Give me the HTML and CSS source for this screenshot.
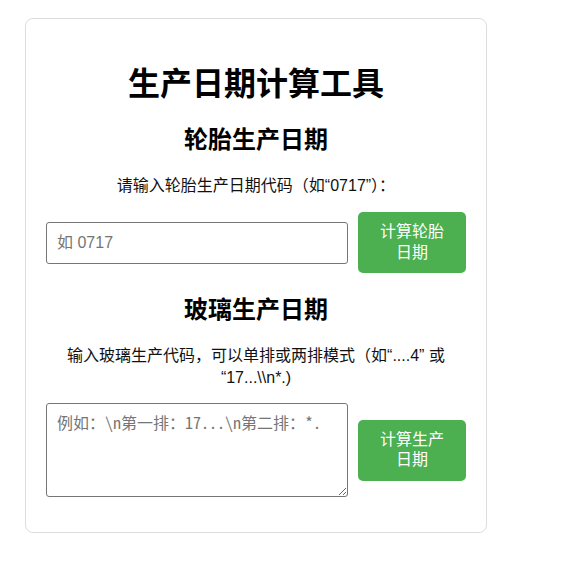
FILE: index.html
```html
<!DOCTYPE html>
<html lang="zh-CN">
<head>
  <meta charset="UTF-8">
  <title>生产日期计算工具</title>
  <link rel="stylesheet" href="styles.css">
</head>
<body>

<!-- MAIN CARD -->
<div class="container">

  <h1>生产日期计算工具</h1>

  <!-- TIRE DATE -->
  <h2>轮胎生产日期</h2>
  <p class="hint">请输入轮胎生产日期代码（如“0717”）：</p>
  <div class="input-row">
    <input type="text" id="tire-code" placeholder="如 0717">
    <button type="button" id="tire-btn">计算轮胎日期</button>
  </div>

  <!-- GLASS DATE -->
  <h2 class="glass-title">玻璃生产日期</h2>
  <p class="hint">输入玻璃生产代码，可以单排或两排模式（如“....4” 或 “17...\\n*.)</p>
  <div class="input-row last">
    <textarea id="glass-code" placeholder="例如：\n第一排：17...\n第二排：*."></textarea>
    <button type="button" id="glass-btn">计算生产日期</button>
  </div>

</div>

</body>
</html>
```

FILE: styles.css
```css
/* --- Global Styles --- */
body { font-family: "Liberation Sans", "Noto Sans CJK SC", sans-serif; background: #fff; margin: 0; padding: 18px 25px; color: #111; }
.container { width: 420px; padding: 20px; border: 1px solid #ddd; border-radius: 8px; background: #fff; }

h1, h2 { text-align: center; color: #000; font-weight: bold; }
h1 { font-size: 32px; line-height: 40px; margin: 25px 0 0; }
h2 { font-size: 24px; line-height: 30px; margin: 21px 0 0; }
.glass-title { margin-top: 22px; }

.hint { text-align: center; font-size: 16px; line-height: 22px; margin: 20px 0 0; }

/* --- Input rows --- */
.input-row { display: flex; align-items: center; gap: 10px; margin-top: 15px; }
.input-row.last { margin-top: 14px; margin-bottom: 15px; }

input, textarea {
  flex: 1; box-sizing: border-box; border: 1px solid #767676; border-radius: 3px;
  background: #fff; color: #333;
}
input { height: 42px; padding: 0 10px; font-size: 16px; font-family: "Liberation Sans", "Noto Sans CJK SC", sans-serif; }
textarea { height: 94px; padding: 8px 10px; font-size: 16px; line-height: 20px; font-family: "Noto Sans Mono CJK SC", "Liberation Mono", monospace; resize: vertical; }
input::placeholder, textarea::placeholder { color: #757575; }

button {
  width: 108px; padding: 10px 20px; border: none; border-radius: 5px;
  background: #4CAF50; color: #fff; font-size: 16px; line-height: 20.5px; cursor: pointer;
  font-family: "Liberation Sans", "Noto Sans CJK SC", sans-serif;
}
```
